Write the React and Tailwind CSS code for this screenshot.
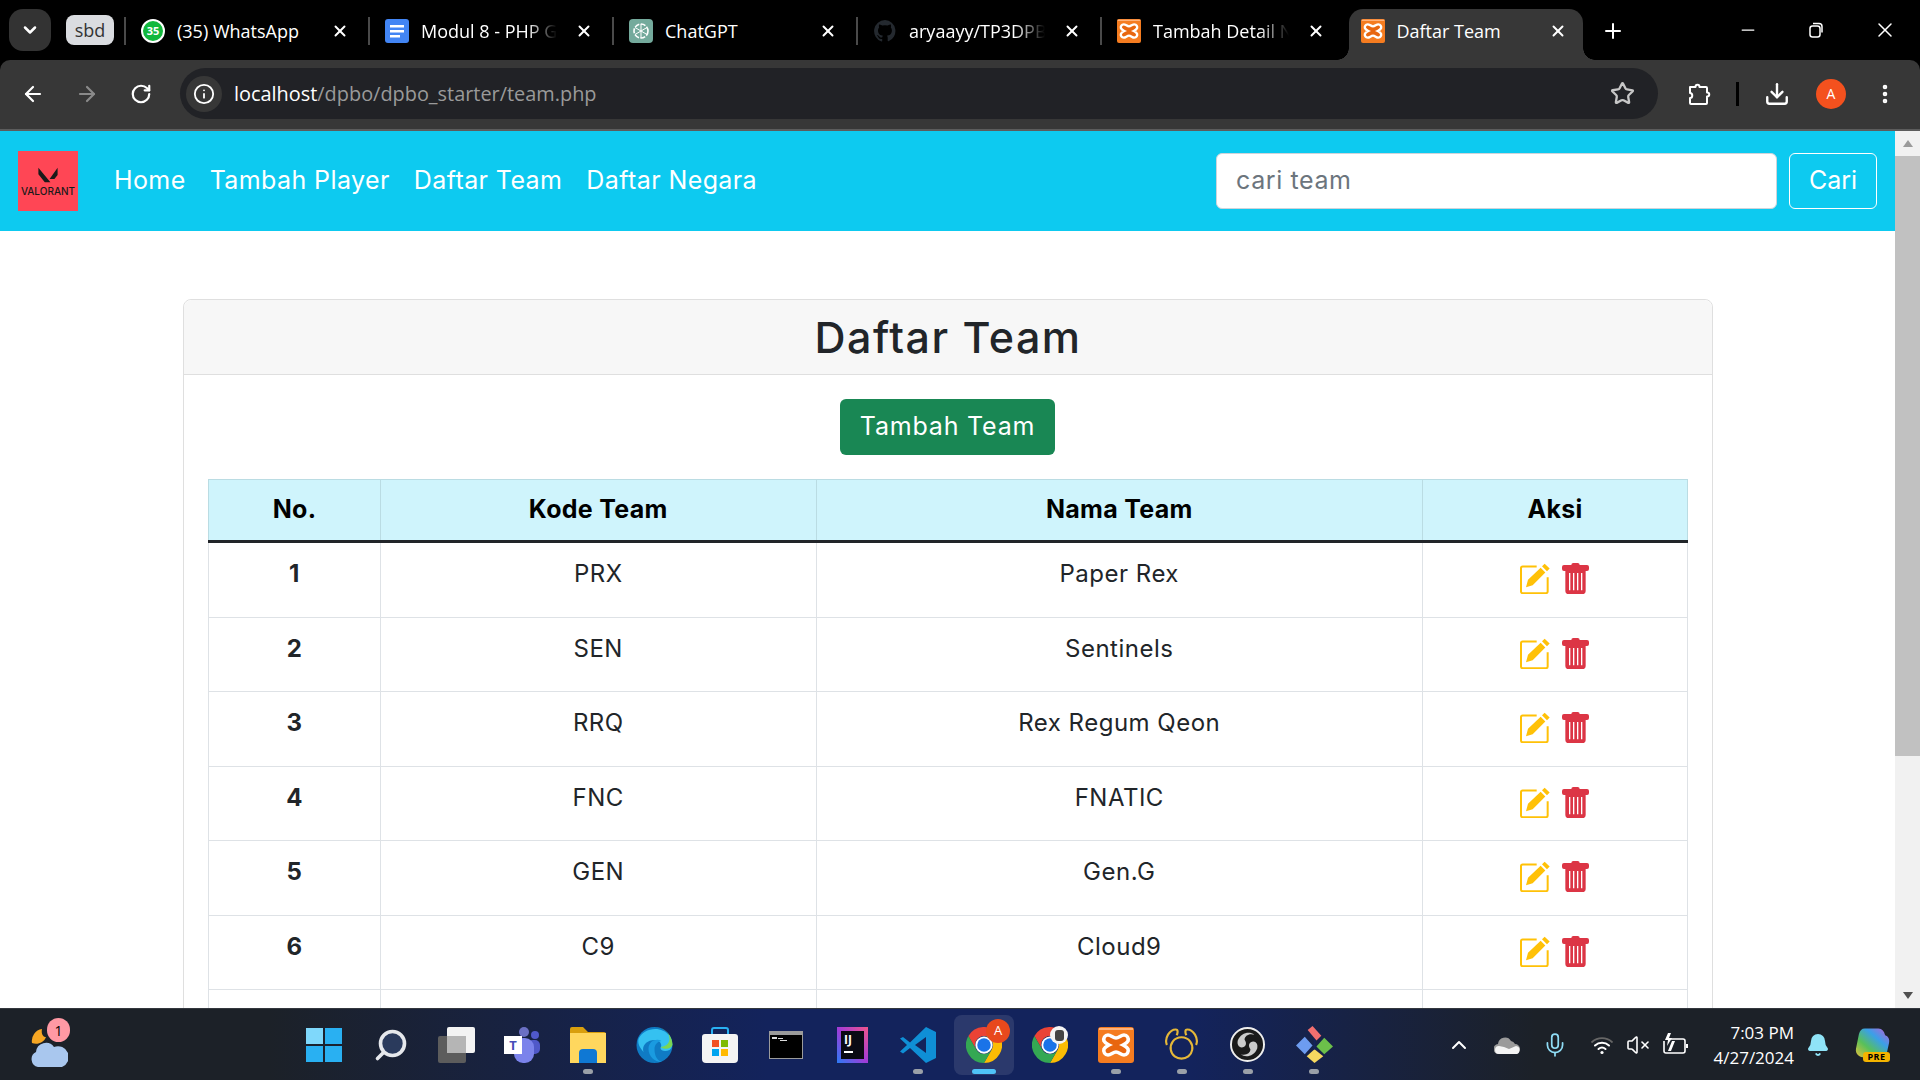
import { ArrowLeft, ArrowRight, RotateCw, Info, Star, Download, EllipsisVertical, ChevronDown, ChevronUp, X, Plus, Minus, Search, Mic, VolumeX, Bell } from 'lucide-react'

const teams = [
  ['1', 'PRX', 'Paper Rex'],
  ['2', 'SEN', 'Sentinels'],
  ['3', 'RRQ', 'Rex Regum Qeon'],
  ['4', 'FNC', 'FNATIC'],
  ['5', 'GEN', 'Gen.G'],
  ['6', 'C9', 'Cloud9'],
  ['', '', ''],
]

function XamppIcon({ size = 24 }) {
  return (
    <svg width={size} height={size} viewBox="0 0 36 36">
      <rect width="36" height="36" rx="3" fill="#f57c20" />
      <rect x="1" y="1" width="34" height="2" fill="#ffb27a" />
      <path d="M10 8c3 0 5 3 8 3s5-3 8-3c3 0 5 3 4 6-1 2-3 3-5 4 2 1 4 2 5 4 1 3-1 6-4 6-3 0-5-3-8-3s-5 3-8 3c-3 0-5-3-4-6 1-2 3-3 5-4-2-1-4-2-5-4-1-3 1-6 4-6z" fill="#e8660f" stroke="#fff" strokeWidth="3.6" />
    </svg>
  )
}

function ChromeIcon({ size = 36 }) {
  return (
    <svg width={size} height={size} viewBox="0 0 48 48">
      <path d="M3.200 12A24 24 0 0 1 44.800 12L24 12A12 12 0 0 0 13.600 30Z" fill="#ea4335" />
      <path d="M44.800 12A24 24 0 0 1 24 48L34.400 30A12 12 0 0 0 24 12Z" fill="#fbbc04" />
      <path d="M3.200 12A24 24 0 0 0 24 48L34.400 30A12 12 0 0 1 13.600 30Z" fill="#34a853" />
      <circle cx="24" cy="24" r="11.500" fill="#fff" />
      <circle cx="24" cy="24" r="9" fill="#1a73e8" />
    </svg>
  )
}

function EditIcon() {
  return (
    <svg width="30" height="31" viewBox="0 0 90 92">
      <path d="M50 10H8a5 5 0 0 0-5 5v70a5 5 0 0 0 5 5h70a5 5 0 0 0 5-5V42" fill="none" stroke="#ffc107" strokeWidth="6" />
      <path d="M18 72l6-22L62 14l14 14-38 38zM66 9l8-7 15 14-8 8z" fill="#ffc107" />
    </svg>
  )
}

function TrashIcon() {
  return (
    <svg width="27" height="31" viewBox="0 0 81 93">
      <path d="M28 6q0-6 6-6h13q6 0 6 6h22q6 0 6 6v6q0 6-6 6H6q-6 0-6-6v-6q0-6 6-6z" fill="#dc3545" />
      <path d="M10 24h61v59q0 10-10 10H20q-10 0-10-10z" fill="#dc3545" />
      <path d="M21 30h4v52h-4zM33 30h4v52h-4zM45 30h4v52h-4zM57 30h4v52h-4z" fill="#fff" />
    </svg>
  )
}

function Tab({ icon, title, fade }) {
  return (
    <div className="relative flex items-center w-[244px] h-[44px] pl-[17px]">
      <span className="absolute left-0 top-[8px] h-[28px] w-[2px] bg-[#4a4a4a]" />
      <span className="w-[24px] h-[24px] flex items-center justify-center shrink-0">{icon}</span>
      <span className={`ml-[12px] w-[136px] whitespace-nowrap text-[18px] font-medium text-white ${fade ? '[mask-image:linear-gradient(to_right,black_78%,transparent)]' : ''}`}>{title}</span>
      <X size={18} className="ml-[18px] text-white" strokeWidth={2.6} />
    </div>
  )
}

function TaskIcon({ children, dot }) {
  return (
    <div className="relative w-[66px] h-[71px] shrink-0 flex items-center justify-start">
      {children}
      {dot && <span className="absolute left-[13px] bottom-[6px] w-[10px] h-[5px] rounded-full bg-[#9aa0a8]" />}
    </div>
  )
}

export default function App() {
  return (
    <div className="h-screen flex flex-col overflow-hidden bg-black font-['Inter',sans-serif] text-[#212529]">
      {/* browser tabs */}
      <div className="h-[60px] bg-black flex items-start pt-[9px] pl-[9px] shrink-0 font-['Open_Sans',sans-serif]">
        <div className="w-[42px] h-[42px] rounded-[14px] bg-[#333] flex items-center justify-center">
          <ChevronDown size={20} className="text-white" strokeWidth={3} />
        </div>
        <div className="ml-[15px] mt-[6px] w-[48px] h-[30px] rounded-[8px] bg-[#dadce0] flex items-center justify-center text-[18px] text-[#333]">sbd</div>
        <div className="ml-[10px] flex">
          <Tab
            title="(35) WhatsApp"
            icon={
              <span className="w-[24px] h-[24px] rounded-full bg-[#12b83d] border-2 border-white flex items-center justify-center text-[11px] font-bold text-white">35</span>
            }
          />
          <Tab
            title="Modul 8 - PHP G"
            fade
            icon={
              <svg width="24" height="24" viewBox="0 0 24 24">
                <rect width="24" height="24" rx="3" fill="#4285f4" />
                <path d="M5 6h14v2.500H5zM5 11h14v2.500H5zM5 16h10v2.500H5z" fill="#fff" />
              </svg>
            }
          />
          <Tab
            title="ChatGPT"
            icon={
              <svg width="24" height="24" viewBox="0 0 24 24">
                <rect width="24" height="24" rx="4" fill="#74aa9c" />
                <circle cx="12" cy="12" r="7" fill="none" stroke="#fff" strokeWidth="1.600" strokeDasharray="5 1.500" />
                <path d="M12 5v14M6 8.500l12 7M18 8.500l-12 7" stroke="#fff" strokeWidth="1" />
              </svg>
            }
          />
          <Tab
            title="aryaayy/TP3DPB"
            fade
            icon={
              <svg width="24" height="24" viewBox="0 0 24 24">
                <path d="M12 1a11 11 0 0 0-3.500 21.400c.5.100.7-.2.700-.5v-2c-3 .6-3.700-1.400-3.700-1.400-.5-1.300-1.200-1.600-1.200-1.600-1-.7.100-.7.100-.7 1.100.100 1.700 1.100 1.700 1.100 1 1.700 2.600 1.200 3.200.9.100-.7.400-1.200.7-1.500-2.400-.3-5-1.200-5-5.400 0-1.200.4-2.200 1.100-2.900-.1-.3-.5-1.400.1-2.900 0 0 .9-.3 3 1.100a10 10 0 0 1 5.500 0c2.100-1.400 3-1.100 3-1.100.6 1.500.2 2.600.1 2.900.7.800 1.100 1.700 1.100 2.900 0 4.200-2.600 5.100-5 5.400.4.300.8 1 .8 2v3c0 .3.200.6.800.5A11 11 0 0 0 12 1z" fill="#24292f" />
              </svg>
            }
          />
          <Tab title="Tambah Detail N" fade icon={<XamppIcon />} />
        </div>
        <div className="ml-[4.500px] relative w-[234px] h-[51px] bg-[#373737] rounded-t-[14px] flex items-center pl-[12px] pb-[7px] text-[18px] font-medium text-white">
          <span className="absolute left-[-12px] bottom-0 w-[12px] h-[12px] bg-[radial-gradient(circle_at_0_0,transparent_11.500px,#373737_12px)]" />
          <span className="absolute right-[-12px] bottom-0 w-[12px] h-[12px] bg-[radial-gradient(circle_at_100%_0,transparent_11.500px,#373737_12px)]" />
          <XamppIcon />
          <span className="ml-[12px] w-[152px]">Daftar Team</span>
          <X size={18} strokeWidth={2.6} />
        </div>
        <Plus size={24} className="ml-[18px] mt-[10px] text-white" strokeWidth={2} />
        <Minus size={20} className="ml-[113px] mt-[11px] text-white" strokeWidth={1.500} />
        <svg width="20" height="20" viewBox="0 0 20 20" className="ml-[48px] mt-[11px]">
          <rect x="4" y="6" width="10" height="11" rx="2.500" fill="none" stroke="#fff" strokeWidth="1.500" />
          <path d="M7 3.500h6a3 3 0 0 1 3 3v6" fill="none" stroke="#fff" strokeWidth="1.500" />
        </svg>
        <X size={24} className="ml-[47px] mt-[9px] text-white" strokeWidth={1.500} />
      </div>

      {/* toolbar */}
      <div className="h-[71px] bg-[#373737] border-b-2 border-[#5c5c5c] rounded-t-[10px] flex items-center shrink-0 font-['Open_Sans',sans-serif] pb-[2px]">
        <ArrowLeft size={24} className="ml-[21px] text-white" strokeWidth={2.200} />
        <ArrowRight size={24} className="ml-[30px] text-[#8a8a8a]" strokeWidth={2.200} />
        <RotateCw size={22} className="ml-[31px] text-white" strokeWidth={2.400} />
        <div className="ml-[28px] w-[1478px] h-[51px] rounded-full bg-[#212226] flex items-center pl-[6px]">
          <span className="w-[36px] h-[36px] rounded-full bg-[#373737] flex items-center justify-center">
            <Info size={22} className="text-white" strokeWidth={2} />
          </span>
          <span className="ml-[12px] text-[19.900px] text-white">localhost<span className="text-[#9a9a9a]">/dpbo/dpbo_starter/team.php</span></span>
          <Star size={25} className="ml-auto mr-[23px] text-[#c7c7c7]" strokeWidth={2.200} />
        </div>
        <svg width="24" height="24" viewBox="0 0 24 24" className="ml-[29px]" fill="none" stroke="#fff" strokeWidth="2" strokeLinejoin="round">
          <path d="M3 5h5.500c0-3 4-3 4 0H19a1 1 0 0 1 1 1v4.500c3 0 3 4 0 4V21a1 1 0 0 1-1 1H4a1 1 0 0 1-1-1v-5c3 0 3-5 0-5z" />
        </svg>
        <span className="ml-[25px] w-[3px] h-[24px] bg-black" />
        <Download size={26} className="ml-[25px] text-white" strokeWidth={2.200} />
        <span className="ml-[26px] w-[30px] h-[30px] rounded-full bg-[#f4511e] flex items-center justify-center text-[14px] text-white">A</span>
        <EllipsisVertical size={24} className="ml-[27px] text-white" strokeWidth={2.600} />
      </div>

      {/* page */}
      <div className="flex-1 min-h-0 flex bg-white">
        <div className="flex-1 min-w-0 overflow-hidden">
          <nav className="h-[100px] bg-[#0dcaf0] flex items-center pl-[18px] pr-[18px]">
            <div className="w-[60px] h-[60px] bg-[#ff4655] flex flex-col items-center justify-center">
              <svg width="24" height="16" viewBox="0 0 24 20">
                <path d="M0 1l15 18H8L0 9zM24 1v9l-4 5h-6z" fill="#1a1a1a" />
              </svg>
              <span className="mt-[3px] text-[10px] leading-none font-medium text-[#1a1a1a]">VALORANT</span>
            </div>
            <div className="ml-[36px] flex gap-[24px] text-[25px] text-white tracking-[0.4px]">
              <a>Home</a>
              <a>Tambah Player</a>
              <a>Daftar Team</a>
              <a>Daftar Negara</a>
            </div>
            <div className="ml-auto w-[561px] h-[56px] rounded-[6px] bg-white border border-[#ced4da] flex items-center pl-[19px] text-[25px] text-[#6c757d] tracking-[0.6px]">cari team</div>
            <div className="ml-[12px] w-[88px] h-[56px] rounded-[6px] border border-white flex items-center justify-center text-[25px] text-white">Cari</div>
          </nav>

          <div className="mt-[68px] ml-[183px] w-[1530px] rounded-t-[8px] border border-[#dfdfdf]">
            <div className="h-[75px] bg-[#f7f7f7] border-b border-[#dfdfdf] rounded-t-[8px] flex items-center justify-center text-[43px] font-medium tracking-[1.500px]">Daftar Team</div>
            <div className="pt-[24px] pl-[24px] pr-[25px]">
              <div className="flex justify-center">
                <button className="w-[215px] h-[56px] rounded-[6px] bg-[#198754] text-[25px] text-white tracking-[0.8px]">Tambah Team</button>
              </div>
              <table className="mt-[24px] w-[1479px] table-fixed border-collapse text-[24px] tracking-[0.500px] text-center">
                <colgroup>
                  <col className="w-[172px]" />
                  <col className="w-[435.500px]" />
                  <col className="w-[606.500px]" />
                  <col className="w-[265px]" />
                </colgroup>
                <thead>
                  <tr className="h-[62px] bg-[#cff4fc] text-black">
                    {['No.', 'Kode Team', 'Nama Team', 'Aksi'].map(h => (
                      <th key={h} className="text-[25px] font-bold tracking-[0.300px] border border-[#badce3] border-b-[#212529] border-b-[3px]">{h}</th>
                    ))}
                  </tr>
                </thead>
                <tbody>
                  {teams.map((t, i) => (
                    <tr key={i} className="h-[74.500px] first:h-[75.500px]">
                      <td className="border border-[#dee2e6] align-top pt-[13px] font-bold">{t[0]}</td>
                      <td className="border border-[#dee2e6] align-top pt-[13px]">{t[1]}</td>
                      <td className="border border-[#dee2e6] align-top pt-[13px]">{t[2]}</td>
                      <td className="border border-[#dee2e6] align-top pt-[20px]">
                        {t[0] && (
                          <div className="flex justify-center gap-[12px] pr-[2px]">
                            <EditIcon />
                            <TrashIcon />
                          </div>
                        )}
                      </td>
                    </tr>
                  ))}
                </tbody>
              </table>
            </div>
          </div>
        </div>

        {/* scrollbar */}
        <div className="w-[25px] bg-[#f1f1f1] flex flex-col items-center shrink-0">
          <div className="h-[25px] flex items-center justify-center">
            <span className="w-0 h-0 border-x-[5px] border-x-transparent border-b-[7px] border-b-[#9a9a9a]" />
          </div>
          <div className="w-full h-[600px] bg-[#c1c1c1]" />
          <div className="mt-auto h-[25px] flex items-center justify-center">
            <span className="w-0 h-0 border-x-[5px] border-x-transparent border-t-[7px] border-t-[#505050]" />
          </div>
        </div>
      </div>

      {/* taskbar */}
      <div className="h-[72px] shrink-0 bg-[linear-gradient(90deg,#1c2128_0%,#1c2128_14%,#13235c_40%,#13235c_62%,#1c2128_80%,#1c2128_100%)] border-t border-[#33373e] flex items-center text-white font-['Open_Sans',sans-serif]">
        <div className="w-[306px] shrink-0 pl-[30px] relative h-full flex items-center">
          <svg width="38" height="44" viewBox="0 0 38 44">
            <path d="M12 6a12 12 0 0 0-10 14c5 2 12 0 14-6-3 0-5-3-4-8z" fill="#f6a623" />
            <path d="M8 44a8 8 0 0 1-2-15 10 10 0 0 1 18-5 10 10 0 0 1 8 20z" fill="#a9c7ee" />
          </svg>
          <span className="absolute left-[47px] top-[9px] w-[23px] h-[24px] rounded-full bg-[#ff99a4] text-black text-[14px] flex items-center justify-center">1</span>
        </div>
        <TaskIcon>
          <svg width="36" height="36" viewBox="0 0 36 36">
            <path d="M0 1h17v16H0zM19 1h17v16H19zM0 19h17v16H0zM19 19h17v16H19z" fill="#29b0f2" />
            <path d="M0 1h17v16H0z" fill="#7fd8fb" />
          </svg>
        </TaskIcon>
        <TaskIcon>
          <Search size={36} className="ml-[1px] text-[#e6e8ec] fill-[#2a3a5c] -scale-x-100" strokeWidth={2.400} />
        </TaskIcon>
        <TaskIcon>
          <svg width="37" height="36" viewBox="0 0 37 36">
            <rect x="9" y="0" width="28" height="26" rx="2" fill="#f3f3f3" />
            <rect x="0" y="9" width="28" height="27" rx="2" fill="#5c5c5c" />
            <rect x="9" y="9" width="19" height="17" fill="#b5b5b5" />
          </svg>
        </TaskIcon>
        <TaskIcon>
          <svg width="36" height="36" viewBox="0 0 36 36">
            <circle cx="20" cy="5" r="5" fill="#6b70c4" />
            <circle cx="31" cy="8" r="4" fill="#5059c9" />
            <rect x="24" y="13" width="12" height="14" rx="5" fill="#5059c9" />
            <rect x="10" y="11" width="20" height="25" rx="9" fill="#7b83eb" />
            <rect x="0" y="9" width="18" height="18" fill="#fff" />
          </svg>
          <span className="absolute left-0 top-[27px] w-[18px] text-center text-[13px] font-bold text-[#464eb8]">T</span>
        </TaskIcon>
        <TaskIcon dot>
          <svg width="36" height="36" viewBox="0 0 36 36">
            <path d="M0 2a2 2 0 0 1 2-2h11l5 5h16a2 2 0 0 1 2 2v5H0z" fill="#d99f0d" />
            <path d="M0 6h36v30H0z" fill="#ffd75e" />
            <path d="M9 26a4 4 0 0 1 4-4h10a4 4 0 0 1 4 4v10H9z" fill="#0f78d4" />
          </svg>
        </TaskIcon>
        <TaskIcon>
          <svg width="37" height="36" viewBox="0 0 36 36">
            <circle cx="18" cy="18" r="18" fill="#0f7bc4" />
            <path d="M2 12C6 2 24-3 33 9c4 6 3 12 0 14-4 2-9 1-9-2 2-3 0-8-6-8-8 0-13 6-11 12-3-4-6-7-5-13z" fill="#35c1f1" />
            <path d="M36 18c0-8-6-17-16-18 8 1 13 6 13 12 0 5-5 8-9 8 4 3 11 2 12-2z" fill="#7bd652" />
            <path d="M18 22c0-5 4-8 7-8-5-3-13 0-13 8 0 7 6 13 13 13-5-2-7-7-7-13z" fill="#1a9be0" />
          </svg>
        </TaskIcon>
        <TaskIcon>
          <svg width="36" height="36" viewBox="0 0 36 36">
            <path d="M10 8V3a2 2 0 0 1 2-2h12a2 2 0 0 1 2 2v5" fill="none" stroke="#29b0f2" strokeWidth="2" />
            <path d="M0 10a3 3 0 0 1 3-3h30a3 3 0 0 1 3 3v22a4 4 0 0 1-4 4H4a4 4 0 0 1-4-4z" fill="#f4f4f4" />
            <path d="M10 13h7v7h-7z" fill="#f25022" />
            <path d="M19 13h7v7h-7z" fill="#7fba00" />
            <path d="M10 22h7v7h-7z" fill="#00a4ef" />
            <path d="M19 22h7v7h-7z" fill="#ffb900" />
          </svg>
        </TaskIcon>
        <TaskIcon>
          <svg width="34" height="28" viewBox="0 0 34 28" className="ml-[1px]">
            <rect width="34" height="28" fill="#9b9b9b" />
            <rect x="1" y="4" width="32" height="23" fill="#000" />
            <path d="M3 6h5v2H3zM9 7h5v1H9zM11 9h7v1h-7z" fill="#ddd" />
          </svg>
        </TaskIcon>
        <TaskIcon>
          <svg width="31" height="36" viewBox="0 0 31 36" className="ml-[3px]">
            <defs>
              <linearGradient id="ij" x1="0" y1="1" x2="1" y2="0">
                <stop offset="0" stopColor="#2a7bf6" />
                <stop offset="0.500" stopColor="#a23bd6" />
                <stop offset="1" stopColor="#f2558a" />
              </linearGradient>
            </defs>
            <rect width="31" height="36" fill="url(#ij)" />
            <rect x="4" y="4" width="23" height="28" fill="#0a0a14" />
            <path d="M7 24h9v2H7z" fill="#fff" />
            <text x="7" y="17" fontSize="12" fontWeight="700" fill="#fff">IJ</text>
          </svg>
        </TaskIcon>
        <TaskIcon dot>
          <svg width="36" height="36" viewBox="0 0 36 36">
            <path d="M26 0l10 5v26l-10 5-16-15-7 5.500L0 24.500 7 18 0 11.500 3 10l7 5.500z" fill="#0f8fd6" />
            <path d="M26 10L15 18l11 8z" fill="#13235c" />
          </svg>
        </TaskIcon>
        <TaskIcon>
          <span className="absolute left-[-12px] top-[6px] w-[60px] h-[60px] rounded-[8px] bg-white/10" />
          <span className="relative"><ChromeIcon /></span>
          <span className="absolute left-[20px] top-[10px] w-[24px] h-[24px] rounded-full bg-[#e8491d] text-[13px] flex items-center justify-center">A</span>
          <span className="absolute left-[6px] bottom-[6px] w-[24px] h-[5px] rounded-full bg-[#4fc3f7]" />
        </TaskIcon>
        <TaskIcon>
          <ChromeIcon />
          <span className="absolute left-[18px] top-[17px] w-[18px] h-[18px] rounded-full bg-[#f4f4f4] flex items-center justify-center">
            <span className="w-[9px] h-[11px] bg-[#444] rounded-[3px]" />
          </span>
        </TaskIcon>
        <TaskIcon dot>
          <XamppIcon size={36} />
        </TaskIcon>
        <TaskIcon dot>
          <svg width="35" height="36" viewBox="0 0 36 36" fill="none" stroke="#e6b838" strokeWidth="2.200">
            <path d="M3 18C0 11 6 2 12 2c3 0 2 4 1 6" />
            <path d="M33 18C36 11 30 2 24 2c-3 0-2 4-1 6" />
            <path d="M18 10C10 10 6 17 7 23c1 6 6 9 11 9s10-3 11-9c1-6-3-13-11-13z" />
          </svg>
        </TaskIcon>
        <TaskIcon dot>
          <svg width="35" height="35" viewBox="0 0 36 36">
            <circle cx="18" cy="18" r="17" fill="#1a1a1a" stroke="#eee" strokeWidth="2" />
            <path d="M8 14c3-8 12-10 17-6-5-2-10 1-10 5 3 4 1 8-3 8-3 0-5-3-4-7zM28 22c-3 8-12 10-17 6 5 2 10-1 10-5-3-4-1-8 3-8 3 0 5 3 4 7z" fill="#ccc" />
          </svg>
        </TaskIcon>
        <TaskIcon dot>
          <svg width="37" height="37" viewBox="0 0 38 38">
            <path d="M12 4l5-4 9 10-5 5z" fill="#f36f6f" />
            <path d="M9 11l8 9-8 9-9-9z" fill="#6d9cf0" />
            <path d="M29 12l9 9-9 8-8-8z" fill="#6cc04a" />
            <path d="M19 24l9 7-9 7-8-7z" fill="#f6d860" />
            <path d="M18 14h2v10h-2z" fill="#13235c" />
          </svg>
        </TaskIcon>

        <ChevronUp size={24} className="ml-[85px] text-white" strokeWidth={2} />
        <svg width="26" height="18" viewBox="0 0 26 18" className="ml-[23px]">
          <path d="M5 18a5 5 0 0 1-1-10 7 7 0 0 1 13-3 6 6 0 0 1 4 3 5 5 0 0 1 0 10z" fill="#9b9b9b" />
          <path d="M5 18a4 4 0 0 1 0-8l5 1 5 2 7-3a4 4 0 0 1-1 8z" fill="#f4f4f4" />
        </svg>
        <Mic size={26} className="ml-[22px] text-[#8fdcf5]" strokeWidth={1.600} />
        <svg width="24" height="24" viewBox="0 0 24 24" fill="none" strokeLinecap="round" className="ml-[22px]">
          <path d="M2 9a15 15 0 0 1 20 0" stroke="#666" strokeWidth="1.800" />
          <path d="M5 12.500a10.500 10.500 0 0 1 14 0M8.500 16a5.500 5.500 0 0 1 7 0" stroke="#fff" strokeWidth="2" />
          <circle cx="12" cy="19.500" r="1.600" fill="#fff" />
        </svg>
        <VolumeX size={24} className="ml-[12px] text-white" strokeWidth={1.600} />
        <svg width="26" height="26" viewBox="0 0 26 26" fill="none" stroke="#fff" strokeWidth="1.600" className="ml-[12px]">
          <path d="M9 7h12a2 2 0 0 1 2 2v10a2 2 0 0 1-2 2H4a2 2 0 0 1-2-2V9" />
          <path d="M25 12v4" strokeWidth="2" />
          <path d="M6 1L3 8h3l-1 6 5-8H7l2-5z" fill="#fff" stroke="none" />
          <path d="M9 19l4-10h-3l-4 10z" fill="#fff" stroke="none" />
        </svg>
        <div className="ml-[14px] w-[92px] text-right text-[17px] leading-[25px] whitespace-nowrap">
          <div>7:03 PM</div>
          <div>4/27/2024</div>
        </div>
        <Bell size={24} className="ml-[12px] text-[#8fe3f7] fill-[#8fe3f7]" />
        <div className="ml-[25px] relative w-[35px] h-[46px]">
          <svg width="35" height="30" viewBox="0 0 36 30" className="mt-[6px]">
            <defs>
              <linearGradient id="cp" x1="0" y1="1" x2="1" y2="0">
                <stop offset="0" stopColor="#e6c13a" />
                <stop offset="0.350" stopColor="#58c05a" />
                <stop offset="0.650" stopColor="#3aa0e8" />
                <stop offset="1" stopColor="#c45ad8" />
              </linearGradient>
            </defs>
            <path d="M10 0h14c4 0 6 3 7 7 3 1 5 4 4 8l-2 9c-1 4-4 6-8 6H10c-5 0-10-3-9-9L4 6c1-4 3-6 6-6z" fill="url(#cp)" />
          </svg>
          <span className="absolute right-0 top-[30px] w-[27px] h-[10px] rounded-[3px] bg-[#f4b400] text-[9px] leading-[10px] text-center font-bold text-black tracking-[0.5px]">PRE</span>
        </div>
      </div>
    </div>
  )
}
